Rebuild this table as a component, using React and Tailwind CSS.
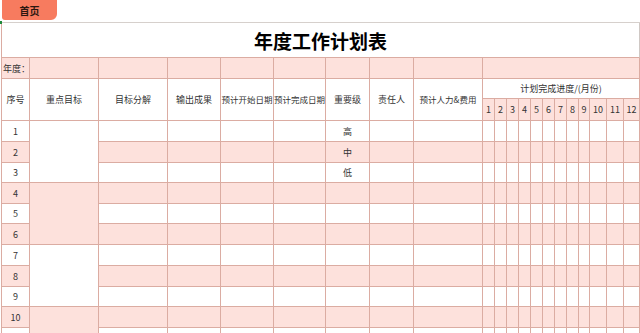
import React from "react";

const months = [1, 2, 3, 4, 5, 6, 7, 8, 9, 10, 11, 12];
const heads = ["序号", "重点目标", "目标分解", "输出成果", "预计开始日期", "预计完成日期", "重要级", "责任人", "预计人力&费用"];
const rows = [1, 2, 3, 4, 5, 6, 7, 8, 9, 10, 11, 12];
const levels = { 1: "高", 2: "中", 3: "低" };

const line = "border-r border-b border-[#dbaca2]";

function Cell({ pink, className = "", children }) {
  return (
    <div
      className={`${line} ${pink ? "bg-[#fde1dc]" : "bg-white"} flex items-center justify-center overflow-hidden whitespace-nowrap ${className}`}
    >
      {children}
    </div>
  );
}

export default function App() {
  return (
    <div className="w-[640px] h-[333px] overflow-hidden bg-white text-[#333] font-['Noto_Sans_CJK_SC','Noto_Sans',sans-serif]">
      <div className="relative h-[22px] flex items-start">
        <div className="ml-[2px] w-[55px] h-[20px] bg-[#f77b5f] rounded-bl-[3px] rounded-br-[6px] flex items-center justify-center text-[10px] font-bold text-[#2b1710]">
          首页
        </div>
        <div className="absolute left-0 top-[21px] w-[2px] h-[3px] bg-[#1f8a3b]" />
      </div>
      <div className="pl-[1px]">
        <div className="grid grid-cols-[28px_69px_69px_53px_53px_52px_44px_44px_69px_12px_12px_12px_12px_12px_12px_12px_12px_11px_17px_17px_16px] grid-rows-[35px_21px_20px_22px_21px_21px_20px_21px_20px_21px_21px_21px_20px_21px_21px_21px] border-l border-t border-l-[#dbaca2] border-t-[#d6d0cc] text-[9px] leading-none">
          <div className="col-span-21 border-r border-r-[#cfc8c4] border-b border-b-[#dbaca2] bg-white flex items-center justify-center text-[19px] font-bold text-black">
            年度工作计划表
          </div>

          <Cell pink className="justify-start pl-[1px]">年度：</Cell>
          {heads.slice(1).map((h) => (
            <Cell key={"y" + h} pink />
          ))}
          <Cell pink className="col-span-12" />

          {heads.map((h) => (
            <Cell key={h} className={`row-span-2 ${h.length > 5 ? "text-[8.5px]" : ""}`}>
              {h}
            </Cell>
          ))}
          <Cell className="col-span-12">计划完成进度/(月份)</Cell>
          {months.map((m) => (
            <Cell key={"m" + m} pink>
              {m}
            </Cell>
          ))}

          {rows.map((r) => {
            const pink = r % 2 === 0;
            const groupPink = Math.floor((r - 1) / 3) % 2 === 1;
            return (
              <React.Fragment key={r}>
                <Cell pink={pink}>{r <= 10 ? r : ""}</Cell>
                {r % 3 === 1 && <Cell pink={groupPink} className="row-span-3" />}
                <Cell pink={pink} />
                <Cell pink={pink} />
                <Cell pink={pink} />
                <Cell pink={pink} />
                <Cell pink={pink}>{levels[r] || ""}</Cell>
                <Cell pink={pink} />
                <Cell pink={pink} />
                {months.map((m) => (
                  <Cell key={m} pink={pink} />
                ))}
              </React.Fragment>
            );
          })}
        </div>
      </div>
    </div>
  );
}
